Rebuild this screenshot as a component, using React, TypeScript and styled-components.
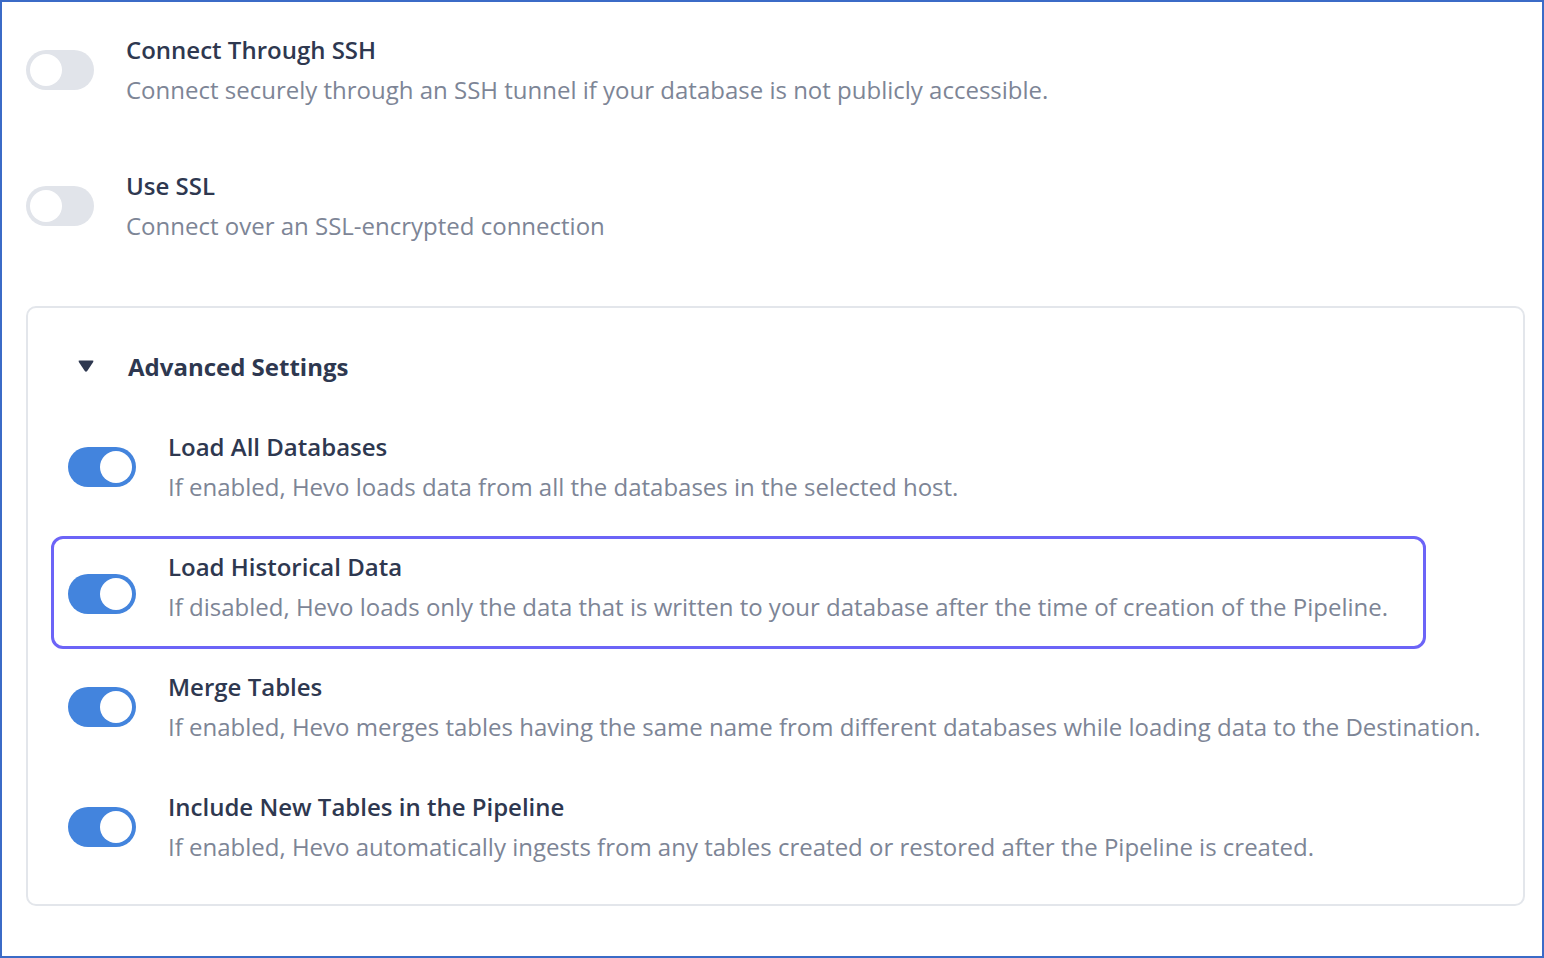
import styled, { createGlobalStyle } from "styled-components"

const GlobalStyle = createGlobalStyle`
    html, body {
        margin: 0;
        padding: 0;
        background: #fff;
    }
    * {
        box-sizing: border-box;
    }
`

const StyledPage = styled.div`
    height: 958px;
    border: 2px solid #3b6bc7;
    padding: 28px 17px 50px 24px;
    background-color: #fff;
    font-family: "Open Sans", "Noto Sans", sans-serif;
    display: flex;
    flex-direction: column;
    gap: 56px;
`

const StyledSettingRow = styled.div`
    display: flex;
    align-items: center;
    gap: 32px;
`

const StyledAdvancedRow = styled.div<{ $highlighted?: boolean }>`
    display: flex;
    align-items: center;
    gap: 32px;
    width: fit-content;
    padding: 8px 35px 19px 14px;
    border: 3px solid ${({ $highlighted }) => ($highlighted ? "#6c64f7" : "transparent")};
    border-radius: 12px;
`

const StyledToggle = styled.span<{ $on?: boolean; $shift?: number }>`
    position: relative;
    flex-shrink: 0;
    width: 68px;
    height: 40px;
    border-radius: 20px;
    margin-top: ${({ $shift }) => $shift ?? 0}px;
    background-color: ${({ $on }) => ($on ? "#4384dd" : "#e1e4ea")};

    &::after {
        content: "";
        position: absolute;
        top: 4px;
        left: ${({ $on }) => ($on ? "32px" : "4px")};
        width: 32px;
        height: 32px;
        border-radius: 50%;
        background-color: #fff;
    }
`

const StyledText = styled.div`
    display: flex;
    flex-direction: column;
`

const StyledTitle = styled.div`
    font-size: 24px;
    line-height: 40px;
    font-weight: 600;
    color: #2e3850;
    white-space: nowrap;
`

const StyledDescription = styled.div`
    font-size: 24px;
    line-height: 40px;
    font-weight: 400;
    color: #7d8596;
    white-space: nowrap;
`

const StyledCard = styled.div`
    margin-top: 4px;
    border: 2px solid #e3e6eb;
    border-radius: 10px;
    padding: 38px 23px 15px 23px;
    display: flex;
    flex-direction: column;
    gap: 7px;
`

const StyledCardHeader = styled.div`
    display: flex;
    align-items: center;
    gap: 33px;
    padding-left: 26px;
    height: 40px;
    margin-bottom: 23px;
`

const StyledCardTitle = styled.div`
    font-size: 24px;
    font-weight: 700;
    color: #2e3850;
`

type Setting = { title: string; description: string; on: boolean; highlighted?: boolean }

const topSettings: Setting[] = [
    {
        title: "Connect Through SSH",
        description: "Connect securely through an SSH tunnel if your database is not publicly accessible.",
        on: false,
    },
    { title: "Use SSL", description: "Connect over an SSL-encrypted connection", on: false },
]

const advancedSettings: Setting[] = [
    {
        title: "Load All Databases",
        description: "If enabled, Hevo loads data from all the databases in the selected host.",
        on: true,
    },
    {
        title: "Load Historical Data",
        description:
            "If disabled, Hevo loads only the data that is written to your database after the time of creation of the Pipeline.",
        on: true,
        highlighted: true,
    },
    {
        title: "Merge Tables",
        description:
            "If enabled, Hevo merges tables having the same name from different databases while loading data to the Destination.",
        on: true,
    },
    {
        title: "Include New Tables in the Pipeline",
        description:
            "If enabled, Hevo automatically ingests from any tables created or restored after the Pipeline is created.",
        on: true,
    },
]

const Caret = () => (
    <svg width="18" height="14" viewBox="0 0 18 14">
        <path d="M2.5 1.5 H15.5 Q17 1.5 16.2 2.9 L10.2 12 Q9 13.6 7.8 12 L1.8 2.9 Q1 1.5 2.5 1.5 Z" fill="#2e3850" />
    </svg>
)

export default function App() {
    return (
        <>
            <GlobalStyle />
            <StyledPage>
                {topSettings.map((s) => (
                    <StyledSettingRow key={s.title}>
                        <StyledToggle $on={s.on} />
                        <StyledText>
                            <StyledTitle>{s.title}</StyledTitle>
                            <StyledDescription>{s.description}</StyledDescription>
                        </StyledText>
                    </StyledSettingRow>
                ))}
                <StyledCard>
                    <StyledCardHeader>
                        <Caret />
                        <StyledCardTitle>Advanced Settings</StyledCardTitle>
                    </StyledCardHeader>
                    {advancedSettings.map((s) => (
                        <StyledAdvancedRow key={s.title} $highlighted={s.highlighted}>
                            <StyledToggle $on={s.on} $shift={s.highlighted ? 13 : 0} />
                            <StyledText>
                                <StyledTitle>{s.title}</StyledTitle>
                                <StyledDescription>{s.description}</StyledDescription>
                            </StyledText>
                        </StyledAdvancedRow>
                    ))}
                </StyledCard>
            </StyledPage>
        </>
    )
}
